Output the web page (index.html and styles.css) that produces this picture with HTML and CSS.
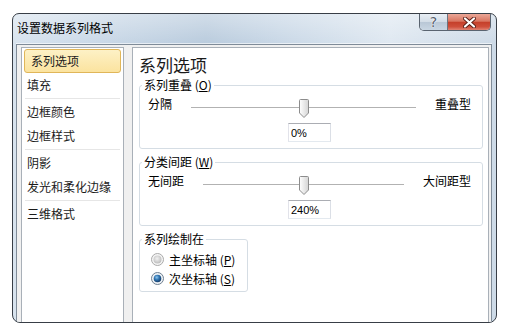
FILE: index.html
```html
<!DOCTYPE html>
<html lang="zh-CN">
<head>
    <meta charset="UTF-8">
    <meta name="viewport" content="width=device-width, initial-scale=1.0">
    <title>设置数据系列格式</title>
    <link rel="stylesheet" href="styles.css">
</head>
<body>
    <div class="window">
        <div class="titlebar">
            <span class="title">设置数据系列格式</span>
            <div class="caption-buttons">
                <span class="btn-help">?</span>
                <span class="btn-close">
                    <svg width="13" height="11" viewBox="0 0 13 11">
                        <path d="M2 1.5l9 8M11 1.5l-9 8" stroke="#5b2018" stroke-width="4" stroke-linecap="round"/>
                        <path d="M2 1.5l9 8M11 1.5l-9 8" stroke="#fff" stroke-width="2.2" stroke-linecap="round"/>
                    </svg>
                </span>
            </div>
        </div>
        <div class="client">
            <!-- 左侧类别列表 -->
            <ul class="nav">
                <li class="selected">系列选项</li>
                <li>填充</li>
                <li class="sep"></li>
                <li>边框颜色</li>
                <li>边框样式</li>
                <li class="sep"></li>
                <li>阴影</li>
                <li>发光和柔化边缘</li>
                <li class="sep"></li>
                <li>三维格式</li>
            </ul>
            <div class="panel">
                <h1>系列选项</h1>
                <fieldset class="group">
                    <legend>系列重叠 (<u>O</u>)</legend>
                    <div class="group-body">
                        <div class="slider-row">
                            <span class="label">分隔</span>
                            <div class="slider">
                                <span class="thumb" style="left: 50%;">
                                    <svg width="10" height="19" viewBox="0 0 10 19">
                                        <defs><linearGradient id="tg1" x1="0" x2="1"><stop offset="0" stop-color="#fff"/><stop offset="1" stop-color="#d4d4d4"/></linearGradient></defs>
                                        <path d="M1.5 .5h7a1 1 0 0 1 1 1V14l-4.5 4.5L.5 14V1.5a1 1 0 0 1 1-1z" fill="url(#tg1)" stroke="#8c8c8c"/>
                                    </svg>
                                </span>
                            </div>
                            <span class="label">重叠型</span>
                        </div>
                        <div class="value-row"><input class="value" type="text" value="0%" readonly></div>
                    </div>
                </fieldset>
                <fieldset class="group">
                    <legend>分类间距 (<u>W</u>)</legend>
                    <div class="group-body">
                        <div class="slider-row">
                            <span class="label">无间距</span>
                            <div class="slider">
                                <span class="thumb" style="left: 50%;">
                                    <svg width="10" height="19" viewBox="0 0 10 19">
                                        <defs><linearGradient id="tg2" x1="0" x2="1"><stop offset="0" stop-color="#fff"/><stop offset="1" stop-color="#d4d4d4"/></linearGradient></defs>
                                        <path d="M1.5 .5h7a1 1 0 0 1 1 1V14l-4.5 4.5L.5 14V1.5a1 1 0 0 1 1-1z" fill="url(#tg2)" stroke="#8c8c8c"/>
                                    </svg>
                                </span>
                            </div>
                            <span class="label">大间距型</span>
                        </div>
                        <div class="value-row"><input class="value" type="text" value="240%" readonly></div>
                    </div>
                </fieldset>
                <fieldset class="group small">
                    <legend>系列绘制在</legend>
                    <div class="radio-body">
                        <label class="radio">
                            <svg width="13" height="13" viewBox="0 0 13 13">
                                <defs><radialGradient id="rg1" cx=".45" cy=".4" r=".6"><stop offset="0" stop-color="#f2f2f2"/><stop offset="1" stop-color="#bdbdbd"/></radialGradient></defs>
                                <circle cx="6.5" cy="6.5" r="6" fill="#f5f5f5" stroke="#a9a9a9"/>
                                <circle cx="6.5" cy="6.5" r="4" fill="url(#rg1)"/>
                            </svg>
                            <span>主坐标轴 (<u>P</u>)</span>
                        </label>
                        <label class="radio">
                            <svg width="13" height="13" viewBox="0 0 13 13">
                                <defs><radialGradient id="rg2" cx=".4" cy=".35" r=".65"><stop offset="0" stop-color="#8cc6ee"/><stop offset=".5" stop-color="#2f73b0"/><stop offset="1" stop-color="#173e6a"/></radialGradient></defs>
                                <circle cx="6.5" cy="6.5" r="6" fill="#eef2f6" stroke="#6f7f90"/>
                                <circle cx="6.5" cy="6.5" r="3.8" fill="url(#rg2)"/>
                            </svg>
                            <span>次坐标轴 (<u>S</u>)</span>
                        </label>
                    </div>
                </fieldset>
            </div>
        </div>
    </div>
</body>
</html>
```

FILE: styles.css
```css
body {
    margin: 0;
    background: #fff;
    font-family: "Noto Sans CJK SC", "Noto Sans", sans-serif;
    font-size: 12px;
    color: #000;
}

/* 窗口外框 */
.window {
    margin: 13px 0 0 12px;
    width: 485px;
    height: 310px;
    box-sizing: border-box;
    border: 1px solid #383e46;
    border-radius: 7px 7px 8px 8px;
    display: flex;
    flex-direction: column;
    overflow: hidden;
    background:
        linear-gradient(180deg, rgba(255,255,255,.35), rgba(255,255,255,0) 30px),
        linear-gradient(90deg, #d8e3ee 0%, #c9d8e7 18%, #b9cbdd 40%, #c8d7e6 55%, #dfe8f1 78%, #cddae7 100%);
}
.titlebar {
    flex: none;
    height: 30px;
    display: flex;
    justify-content: space-between;
    align-items: flex-start;
}
.title {
    padding: 6px 0 0 4px;
    line-height: 16px;
}
.caption-buttons {
    display: flex;
    margin-right: 5px;
    border: 1px solid #5a6470;
    border-top: none;
    border-radius: 0 0 5px 5px;
    overflow: hidden;
}
.btn-help {
    width: 27px;
    height: 16px;
    border-right: 1px solid #6a7582;
    background: linear-gradient(#e8eef4, #d3dde7 48%, #b9c7d6 52%, #c9d6e3);
    color: #56606c;
    font: 14px/16px "DejaVu Sans", sans-serif;
    text-align: center;
    text-shadow: 0 0 2px #fff, 0 0 1px #fff;
}
.btn-close {
    width: 42px;
    height: 16px;
    display: flex;
    align-items: center;
    justify-content: center;
    background: linear-gradient(#eba797, #d97661 45%, #c5402b 52%, #cf4f3b 80%, #e08474);
}

/* 客户区 */
.client {
    flex: 1;
    display: flex;
    gap: 8px;
    margin: 0 4px 0 3px;
    padding: 2px 2px 0 4px;
    border: 1px solid #7f8b98;
    border-bottom: none;
    background: #f0f0f0;
    box-shadow: 0 -1px 0 rgba(255,255,255,.6);
}
.nav {
    list-style: none;
    margin: 0;
    padding: 1px 0 0;
    width: 103px;
    box-sizing: border-box;
    border: 1px solid #a9b0b8;
    border-bottom: none;
    background: #fff;
}
.nav li {
    height: 24px;
    box-sizing: border-box;
    margin: 0 2px;
    padding-left: 2px;
    border: 1px solid transparent;
    line-height: 22px;
    color: #1b1b1b;
}
.nav li.selected {
    padding-left: 6px;
    border-color: #e0b659;
    border-radius: 3px;
    background: linear-gradient(#fdf1c6, #fbe39f);
}
.nav li.sep {
    height: 1px;
    margin: 1px 3px;
    padding: 0;
    border: none;
    background: #e6e6e6;
}

.panel {
    flex: 1;
    padding: 7px 5px 0 6px;
    border: 1px solid #a9b0b8;
    border-bottom: none;
    background: #fff;
}
.panel h1 {
    margin: 0 0 3px;
    font-size: 17px;
    font-weight: normal;
    line-height: 20px;
    color: #1a1a1a;
}

/* 分组框 */
.group {
    margin: 0;
    padding: 0;
    min-width: 0;
    border: 1px solid #d5dde4;
    border-radius: 3px;
}
.group + .group {
    margin-top: 6px;
}
.group.small {
    width: 109px;
    box-sizing: border-box;
}
.group legend {
    margin-left: 2px;
    padding: 0 2px;
    line-height: 14px;
}
.group-body {
    padding: 6px 11px 6px 8px;
}
.slider-row {
    display: flex;
    align-items: flex-start;
    height: 20px;
}
.slider-row .label {
    line-height: 14px;
    margin-top: -1px;
}
.slider {
    flex: 1;
    position: relative;
    height: 20px;
    margin: 0 19px;
}
.slider::before {
    content: "";
    position: absolute;
    left: 0;
    right: 0;
    top: 9px;
    height: 1px;
    background: #b2b2b2;
}
.thumb {
    position: absolute;
    top: 1px;
    margin-left: -5px;
    width: 10px;
    height: 19px;
}
.thumb svg {
    display: block;
}
.value-row {
    display: flex;
    justify-content: center;
    margin-top: 5px;
}
.value {
    width: 43px;
    height: 19px;
    box-sizing: border-box;
    margin: 0;
    padding: 0 2px;
    border: 1px solid;
    border-color: #abadb3 #dbdfe6 #e3e9ef #e2e3ea;
    font: 11px "Liberation Sans", sans-serif;
    color: #000;
    outline: none;
}

.radio-body {
    padding: 4px 0 3px 11px;
}
.radio {
    display: flex;
    align-items: center;
    gap: 5px;
    height: 19px;
}
.radio svg {
    display: block;
}
```
